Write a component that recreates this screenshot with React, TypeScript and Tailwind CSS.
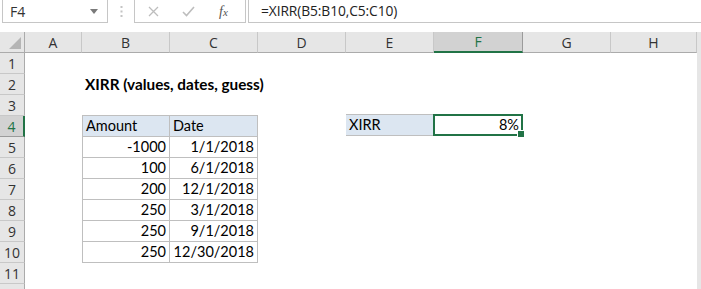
import React from "react";

const cols = [
  { l: "A", w: 57 },
  { l: "B", w: 88 },
  { l: "C", w: 88 },
  { l: "D", w: 88 },
  { l: "E", w: 88 },
  { l: "F", w: 89 },
  { l: "G", w: 88 },
  { l: "H", w: 86 },
];

const rows = [1, 2, 3, 4, 5, 6, 7, 8, 9, 10, 11, 12];

const data: [string, string][] = [
  ["-1000", "1/1/2018"],
  ["100", "6/1/2018"],
  ["200", "12/1/2018"],
  ["250", "3/1/2018"],
  ["250", "9/1/2018"],
  ["250", "12/30/2018"],
];

const cell = "font-['Lato','Liberation_Sans',sans-serif] text-[14.5px] text-[#000] leading-none";

export default function App() {
  return (
    <div className="w-[701px] h-[289px] overflow-hidden bg-white relative">
      {/* Formula bar */}
      <div className="h-[23px] flex items-stretch bg-white font-['Open_Sans','Noto_Sans',sans-serif]">
        <div className="ml-[2px] w-[106px] border border-t-0 border-[#c6c6c6] bg-white flex items-center justify-between pl-[7px] pr-[9px]">
          <span className="text-[14px] text-[#333]">F4</span>
          <svg width="8" height="5" viewBox="0 0 8 5"><path d="M0 0h8L4 5z" fill="#7a7a7a" /></svg>
        </div>
        <div className="w-[26px] flex items-center justify-center">
          <svg width="3" height="11" viewBox="0 0 3 11">
            <rect x="0.5" y="0" width="2" height="2" fill="#c4c4c4" />
            <rect x="0.5" y="4.5" width="2" height="2" fill="#c4c4c4" />
            <rect x="0.5" y="9" width="2" height="2" fill="#c4c4c4" />
          </svg>
        </div>
        <div className="w-[112px] border border-t-0 border-[#c6c6c6] bg-white flex items-center relative">
          <svg className="absolute left-[13px] top-[6px]" width="11" height="11" viewBox="0 0 11 11">
            <path d="M1 1L10 10M10 1L1 10" stroke="#bdbdbd" strokeWidth="1.3" />
          </svg>
          <svg className="absolute left-[47px] top-[6px]" width="13" height="11" viewBox="0 0 13 11">
            <path d="M1 6L4.5 9.5L12 1" stroke="#bdbdbd" strokeWidth="1.6" fill="none" />
          </svg>
          <span className="absolute left-[84px] top-[1px] font-['Liberation_Serif',serif] italic text-[14px] text-[#555]">
            f<span className="text-[11px]">x</span>
          </span>
        </div>
        <div className="ml-[2px] flex-1 border border-t-0 border-r-0 border-[#c6c6c6] bg-white flex items-center pl-[12px]">
          <span className="text-[13.8px] text-[#222] tracking-[-0.1px]">=XIRR(B5:B10,C5:C10)</span>
        </div>
      </div>
      <div className="h-[9px] bg-white" />

      {/* Sheet */}
      <div className="flex">
        {/* Row header column */}
        <div className="w-[25px] flex flex-col">
          <div className="h-[21px] bg-[#e6e6e6] border-b border-r border-[#ababab] relative">
            <svg className="absolute right-[3px] bottom-[3px]" width="12" height="12" viewBox="0 0 12 12">
              <path d="M12 0V12H0z" fill="#b5b5b5" />
            </svg>
          </div>
          {rows.map((r) => (
            <div
              key={r}
              className={
                "h-[21px] flex items-center justify-center border-b font-['Open_Sans','Noto_Sans',sans-serif] text-[14px] " +
                (r === 4
                  ? "bg-[#d2d2d2] border-b-[#9b9b9b] border-r-2 border-r-[#217346] text-[#217346]"
                  : "bg-[#e6e6e6] border-b-[#c8c8c8] border-r border-r-[#ababab] text-[#333]")
              }
            >
              {r < 12 ? r : ""}
            </div>
          ))}
        </div>

        {/* Columns */}
        <div className="flex flex-col flex-1">
          <div className="flex h-[21px]">
            {cols.map((c) => (
              <div
                key={c.l}
                style={{ width: c.w }}
                className={
                  "shrink-0 flex items-center justify-center font-['Open_Sans','Noto_Sans',sans-serif] text-[14px] border-r " +
                  (c.l === "F"
                    ? "bg-[#d2d2d2] text-[#217346] border-b-2 border-b-[#217346] border-r-[#9b9b9b]"
                    : "bg-[#e6e6e6] text-[#333] border-b border-b-[#ababab] border-r-[#c8c8c8]")
                }
              >
                {c.l}
              </div>
            ))}
            <div className="flex-1 bg-[#e6e6e6] border-b border-[#ababab]" />
          </div>

          {/* Body rows */}
          <div className="flex">
            <div className="w-[57px] shrink-0" />
            {/* B-C block */}
            <div className="w-[176px] shrink-0 flex flex-col">
              <div className="h-[21px]" />
              <div className="h-[21px] flex items-center pl-[3px] font-['Lato','Liberation_Sans',sans-serif] text-[15.3px] font-bold text-black leading-none">
                <span className="whitespace-nowrap">XIRR (values, dates, guess)</span>
              </div>
              <div className="h-[21px]" />
              <div className="border border-[#bfbfbf] border-b-0 -mt-[1px] flex flex-col">
                <div className="h-[21px] flex bg-[#dce6f1] border-b border-[#bfbfbf]">
                  <div className={"w-[87px] border-r border-[#bfbfbf] flex items-center pl-[3px] " + cell}>Amount</div>
                  <div className={"flex-1 flex items-center pl-[3px] " + cell}>Date</div>
                </div>
                {data.map(([a, d], i) => (
                  <div key={i} className="h-[21px] flex border-b border-[#bfbfbf]">
                    <div className={"w-[87px] border-r border-[#bfbfbf] flex items-center justify-end pr-[3px] " + cell}>{a}</div>
                    <div className={"flex-1 flex items-center justify-end pr-[3px] " + cell}>{d}</div>
                  </div>
                ))}
              </div>
            </div>
            <div className="w-[88px] shrink-0" />
            {/* E-F */}
            <div className="flex flex-col">
              <div className="h-[62px]" />
              <div className="flex h-[22px] -mt-[1px]">
                <div className={"w-[88px] bg-[#dce6f1] border-y border-[#bfbfbf] flex items-center pl-[3px] " + cell}>XIRR</div>
                <div className={"w-[90px] -ml-[1px] relative border-2 border-[#217346] bg-white flex items-center justify-end pr-[2px] " + cell}>
                  8%
                  <div className="absolute -right-[4px] -bottom-[4px] w-[6px] h-[6px] bg-[#217346] border border-white box-content" />
                </div>
              </div>
            </div>
          </div>
        </div>
      </div>
      <div className="absolute right-0 top-[32px] bottom-0 w-[4px] bg-[#e6e6e6]" />
    </div>
  );
}
